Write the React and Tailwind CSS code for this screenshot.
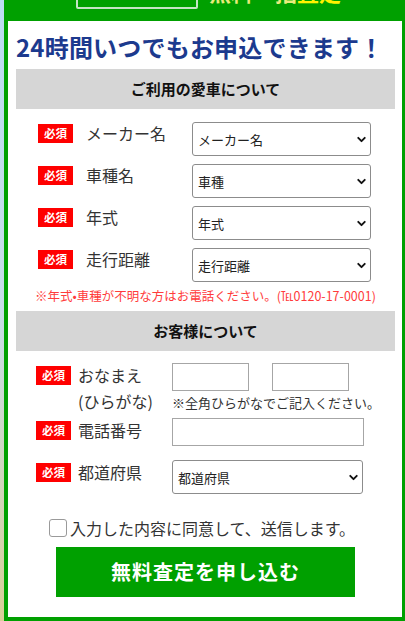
import { ChevronDown } from 'lucide-react'

const carRows = [
  { label: 'メーカー名', value: 'メーカー名' },
  { label: '車種名', value: '車種' },
  { label: '年式', value: '年式' },
  { label: '走行距離', value: '走行距離' },
]

export default function App() {
  return (
    <div className="flex h-[621px] w-[405px] overflow-hidden font-['Noto_Sans_CJK_JP',sans-serif]">
      {/* page background peeking in on the left */}
      <div className="w-[4px] shrink-0 bg-gradient-to-b from-[#bcdcf2] via-[#c8dde8] to-[#d9cf98]" />

      <div className="flex flex-1 flex-col bg-[#00a000] pb-[4px] pl-[4px] pr-[3px]">
        {/* header (cut off at the top) */}
        <div className="flex h-[21px] shrink-0 items-start overflow-hidden">
          <div className="ml-[68px] -mt-[31px] h-[40px] w-[122px] shrink-0 rounded-[2px] border-2 border-[#c4e4c4]" />
          <span className="ml-[11px] -mt-[20px] text-[22px] font-bold leading-[22px] whitespace-nowrap">
            <span className="text-[#e8ec7c]">無料一括</span>
            <span className="text-[#fff200]">査定</span>
          </span>
        </div>

        {/* form panel */}
        <div className="flex flex-1 flex-col bg-white pl-[8px] pr-[7px]">
          <h1 className="flex h-[48px] items-center pt-[4px] text-[24px] font-bold tracking-[0.2px] text-[#1c3a8e]">
            24時間いつでもお申込できます！
          </h1>

          <SectionHeader>ご利用の愛車について</SectionHeader>

          <div className="mt-[13px] ml-[22px] flex flex-col gap-[8px]">
            {carRows.map((row) => (
              <div key={row.label} className="flex items-start">
                <Badge className="mt-[2px]" />
                <span className="ml-[13px] w-[106px] text-[16px] leading-[22px] text-[#333]">{row.label}</span>
                <SelectBox className="w-[179px]" value={row.value} />
              </div>
            ))}
          </div>

          <p className="mt-[4px] text-center text-[12.5px] leading-[20px] text-[#ff3b3b] whitespace-nowrap">
            ※年式•車種が不明な方はお電話ください。(℡0120-17-0001)
          </p>

          <SectionHeader className="mt-[5px]">お客様について</SectionHeader>

          <div className="mt-[12px] ml-[20px]">
            {/* name */}
            <div className="flex items-start">
              <Badge className="mt-[3px]" />
              <span className="ml-[7px] -mt-[1px] w-[94px] text-[16px] leading-[26px] text-[#333]">
                おなまえ
                <br />
                (ひらがな)
              </span>
              <div>
                <div className="flex gap-[23px]">
                  <input className="h-[28px] w-[77px] border border-[#a6a6a6] outline-none" />
                  <input className="h-[28px] w-[77px] border border-[#a6a6a6] outline-none" />
                </div>
                <p className="mt-[3px] text-[13px] leading-[18px] text-[#333] whitespace-nowrap">
                  ※全角ひらがなでご記入ください。
                </p>
              </div>
            </div>

            {/* phone */}
            <div className="mt-[4px] flex items-start">
              <Badge className="mt-[3px]" />
              <span className="ml-[7px] w-[94px] text-[16px] leading-[24px] text-[#333]">電話番号</span>
              <input className="h-[28px] w-[192px] border border-[#a6a6a6] outline-none" />
            </div>

            {/* prefecture */}
            <div className="mt-[14px] flex items-start">
              <Badge className="mt-[3px]" />
              <span className="ml-[7px] w-[94px] text-[16px] leading-[24px] text-[#333]">都道府県</span>
              <SelectBox className="w-[191px]" value="都道府県" />
            </div>
          </div>

          <label className="mt-[25px] flex items-center justify-center pr-[7px]">
            <span className="h-[18px] w-[18px] rounded-[3px] border border-[#9a9a9a] bg-white" />
            <span className="ml-[3px] text-[16px] leading-[18px] text-[#333]">入力した内容に同意して、送信します。</span>
          </label>

          <button className="mx-auto mt-[10px] h-[50px] w-[299px] bg-[#00a000] text-[20px] font-bold tracking-[1px] text-white">
            無料査定を申し込む
          </button>
        </div>
      </div>
    </div>
  )
}

function SectionHeader({ children, className = '' }) {
  return (
    <div className={`flex h-[40px] shrink-0 items-center justify-center bg-[#d6d6d6] text-[15px] font-bold text-[#111] ${className}`}>
      {children}
    </div>
  )
}

function Badge({ className = '' }) {
  return (
    <span className={`flex h-[19px] w-[35px] shrink-0 items-center justify-center bg-[#ff0000] text-[11.5px] font-bold leading-none text-white ${className}`}>
      必須
    </span>
  )
}

function SelectBox({ className = '', value }) {
  return (
    <div className={`relative h-[34px] shrink-0 ${className}`}>
      <select className="h-full w-full appearance-none rounded-[3px] border border-[#8c8c8c] bg-white pl-[5px] pt-[2px] text-[13px] text-[#222] outline-none">
        <option>{value}</option>
      </select>
      <ChevronDown
        className="pointer-events-none absolute right-[3px] top-[11px] text-[#111]"
        size={13}
        strokeWidth={3.5}
      />
    </div>
  )
}
